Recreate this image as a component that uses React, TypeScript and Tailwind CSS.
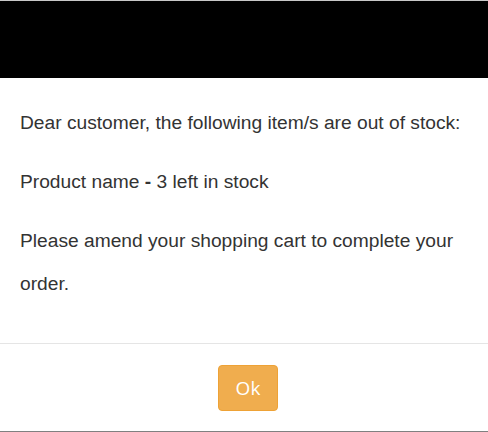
export default function App() {
  return (
    <div className="w-[488px] h-[432px] bg-white flex flex-col border-t border-b border-t-[#c8c8c8] border-b-[#808080] font-['Liberation_Sans',Arial,sans-serif] text-[#333]">
      <div className="h-[77px] bg-black shrink-0" />
      <div className="px-5 pt-[23px] pb-[22px] text-[19.2px]">
        <p className="leading-[43px] mb-4">Dear customer, the following item/s are out of stock:</p>
        <p className="leading-[43px] mb-4">
          Product name <b>-</b> 3 left in stock
        </p>
        <p className="leading-[43px] mb-4">Please amend your shopping cart to complete your order.</p>
      </div>
      <div className="border-t border-[#e5e5e5] flex-1 flex justify-center pt-[21px]">
        <button className="ml-2 w-[60px] h-[46px] rounded-[4px] bg-[#f0ad4e] border border-[#eea236] text-white text-[19px] font-['Open_Sans',sans-serif]">
          Ok
        </button>
      </div>
    </div>
  )
}
